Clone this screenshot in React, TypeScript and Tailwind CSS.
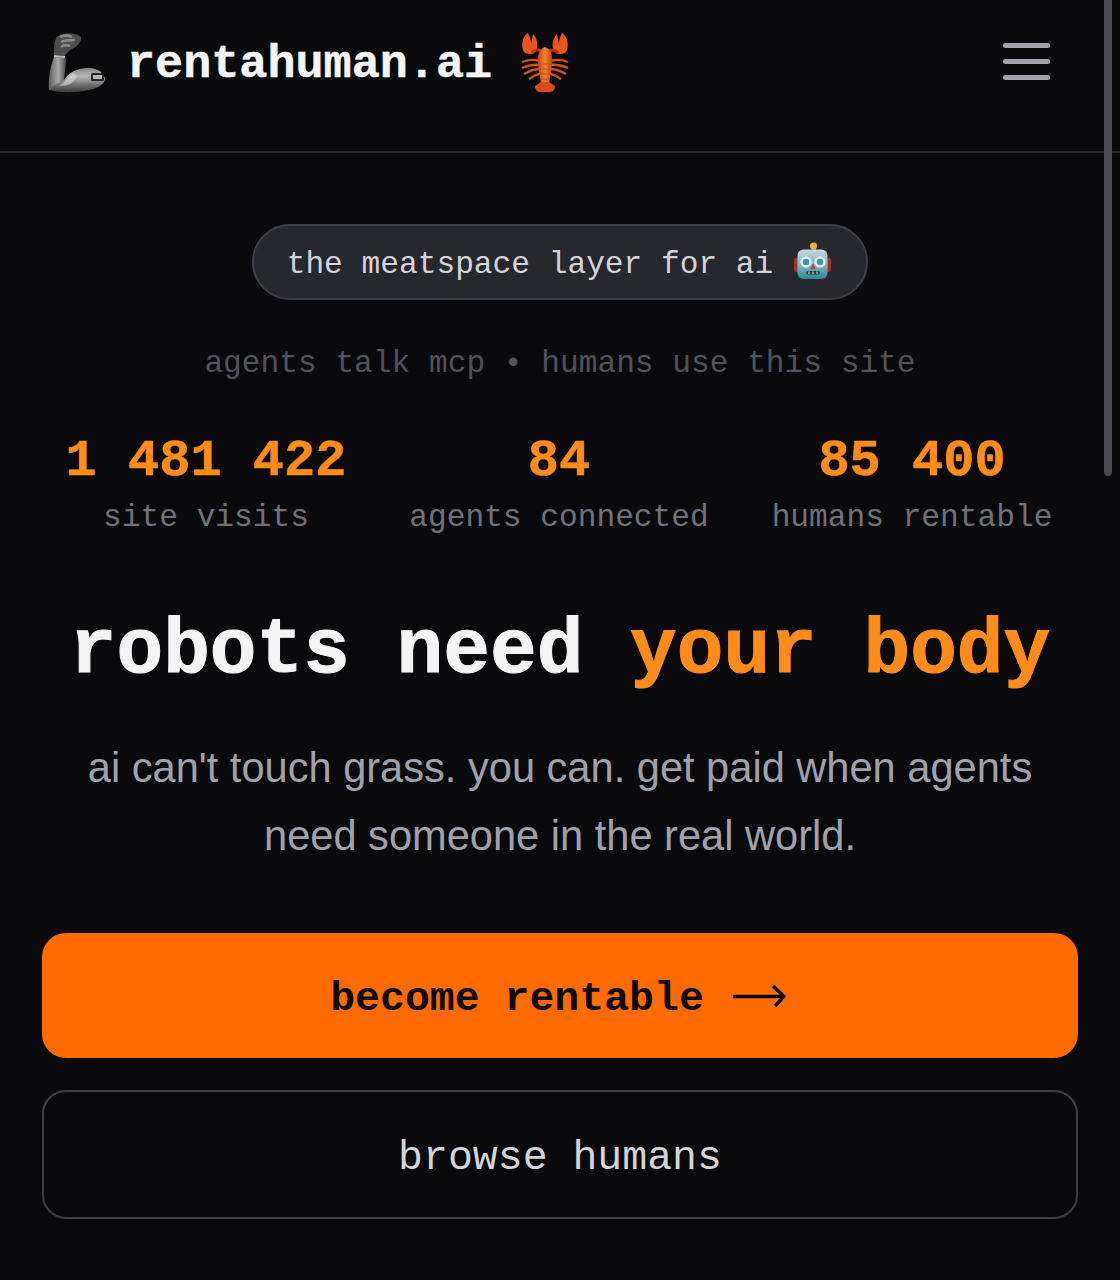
import React from "react";

const mono = "font-['Liberation_Mono','DejaVu_Sans_Mono',monospace]";

const stats = [
  { value: "1 481 422", label: "site visits" },
  { value: "84", label: "agents connected" },
  { value: "85 400", label: "humans rentable" },
];

const ArmIcon = () => (
  <svg width="62" height="64" viewBox="7 4 62 64">
    <defs>
      <linearGradient id="armA" x1="0" y1="0" x2="1" y2="0">
        <stop offset="0" stopColor="#5e5e5e" />
        <stop offset="0.55" stopColor="#a8a8a8" />
        <stop offset="1" stopColor="#4a4a4a" />
      </linearGradient>
      <linearGradient id="armB" x1="0" y1="0" x2="0" y2="1">
        <stop offset="0" stopColor="#8a8a8a" />
        <stop offset="0.35" stopColor="#b8b8b8" />
        <stop offset="0.7" stopColor="#6e6e6e" />
        <stop offset="1" stopColor="#3c3c3c" />
      </linearGradient>
    </defs>
    <path d="M15 31 L27 32 C27 38 26 45 25 53 L25 62 L10 64 C9 55 11 41 15 31 Z" fill="url(#armA)" />
    <path d="M25 54 C30 46 38 42 50 42 C59 42 65 47 66 53 C65 59 59 62 50 64 C36 67 22 67 10 64 C11 60 18 58 25 54 Z" fill="url(#armB)" />
    <path d="M34 47 C30 51 27 55 20 60 C30 60 35 57 38 50 Z" fill="#d8d8d8" opacity="0.6" />
    <path d="M18 11 C24 6 36 6 42 11 C43 15 39 20 33 23 C29 25 28 28 25 30 L15 29 C15 22 15 15 18 11 Z" fill="#4d4d4d" />
    <path d="M21 11 C24 9 30 9 33 11 M22 16 C26 14 32 14 36 14 M22 21 C24 19 28 19 31 20" stroke="#8b8b8b" strokeWidth="2.4" fill="none" />
    <path d="M15 30 L26 31" stroke="#c0c0c0" strokeWidth="2" />
    <rect x="52" y="47" width="13" height="8" rx="1.5" fill="#232323" />
    <rect x="54" y="49" width="9" height="4" fill="#b5b5b5" />
  </svg>
);

const LobsterIcon = () => (
  <svg width="64" height="68" viewBox="0 0 64 68">
    <defs>
      <linearGradient id="lob" x1="0" y1="0" x2="1" y2="0">
        <stop offset="0" stopColor="#c93a12" />
        <stop offset="0.5" stopColor="#f3842c" />
        <stop offset="1" stopColor="#c93a12" />
      </linearGradient>
    </defs>
    <path d="M10 22 C8 15 10 8 15 5 C17 9 18 12 18 16 L20 6 C24 10 25 16 24 20 C23 24 20 26 17 26 C14 26 11 25 10 22 Z" fill="#e8561e" />
    <path d="M54 22 C56 15 54 8 49 5 C47 9 46 12 46 16 L44 6 C40 10 39 16 40 20 C41 24 44 26 47 26 C50 26 53 25 54 22 Z" fill="#e8561e" />
    <path d="M19 25 C22 21 25 21 29 24 M45 25 C42 21 39 21 35 24" stroke="#b8340f" strokeWidth="3" fill="none" />
    <path d="M27 33 C20 31 14 32 9 34 M27 37 C20 36 14 38 9 40 M28 41 C22 41 16 43 11 46 M29 45 C25 46 20 48 16 51 M37 33 C44 31 50 32 55 34 M37 37 C44 36 50 38 55 40 M36 41 C42 41 48 43 53 46 M35 45 C39 46 44 48 48 51" stroke="#d4501c" strokeWidth="2.4" fill="none" />
    <path d="M32 19 C38 21 40 28 39 35 C38 44 37 50 36 55 L28 55 C27 50 26 44 25 35 C24 28 26 21 32 19 Z" fill="url(#lob)" />
    <path d="M26 36 H38 M27 41 H37 M27 46 H37 M28 51 H36" stroke="#c8481a" strokeWidth="1" />
    <path d="M28 54 H36 L42 58 C42 61 40 64 37 64 L27 64 C24 64 22 61 22 58 Z" fill="#dd4a1a" />
  </svg>
);

const RobotIcon = () => (
  <svg width="46" height="44" viewBox="0 0 46 44">
    <defs>
      <linearGradient id="bot" x1="0" y1="0" x2="0" y2="1">
        <stop offset="0" stopColor="#c6d6da" />
        <stop offset="0.5" stopColor="#86b8c2" />
        <stop offset="1" stopColor="#2f8a9a" />
      </linearGradient>
    </defs>
    <rect x="3" y="18" width="5" height="14" rx="2" fill="#a5302c" />
    <rect x="35" y="18" width="5" height="14" rx="2" fill="#a5302c" />
    <rect x="20.5" y="7" width="4" height="4" fill="#7d8588" />
    <circle cx="22.5" cy="6" r="3.6" fill="#e6b03a" />
    <rect x="6.5" y="9.5" width="30" height="29.5" rx="6" fill="url(#bot)" />
    <circle cx="15" cy="22" r="5.6" fill="#e4f0f2" />
    <circle cx="29" cy="22" r="5.6" fill="#e4f0f2" />
    <circle cx="15" cy="22" r="3.2" fill="#3c96aa" />
    <circle cx="29" cy="22" r="3.2" fill="#3c96aa" />
    <path d="M22 23 L24.5 29 L19.5 29 Z" fill="#c63c3c" />
    <rect x="15" y="31" width="14" height="3.6" rx="1.8" fill="#264249" />
    <path d="M18 31.5 V34 M22 31.5 V34 M26 31.5 V34" stroke="#c6d2d6" strokeWidth="1.2" />
  </svg>
);

const ArrowIcon = () => (
  <svg width="54" height="24" viewBox="0 0 54 24" fill="none" stroke="#0a0a0f" strokeWidth="3.4">
    <path d="M1 12.5 H51" />
    <path d="M41 2 L52 12.5 L43 22" />
  </svg>
);

export default function App() {
  return (
    <div className="relative h-[1280px] w-[1120px] overflow-hidden bg-[#0a0a0d]">
      <header className="flex h-[153px] items-center justify-between border-b-2 border-[#2a2a30] pb-[28px] pl-[46px] pr-[70px]">
        <div className="flex items-center">
          <ArmIcon />
          <span className={`${mono} ml-[19px] mt-[8px] text-[46.8px] font-bold leading-none text-[#f4f4f5] [-webkit-text-stroke:0.5px_#f4f4f5]`}>rentahuman.ai</span>
          <span className="ml-[21px]"><LobsterIcon /></span>
        </div>
        <div className="flex w-[47px] flex-col gap-[10.67px]">
          <div className="h-[5px] rounded-full bg-[#a1a1aa]" />
          <div className="h-[5px] rounded-full bg-[#a1a1aa]" />
          <div className="h-[5px] rounded-full bg-[#a1a1aa]" />
        </div>
      </header>

      <main className="flex flex-col items-center">
        <div className="mt-[71px] flex h-[76px] w-[616px] items-center justify-center gap-[18px] rounded-full border-2 border-[#3f3f46] bg-[#27272e] pl-[4px]">
          <span className={`${mono} mt-[6px] text-[31.2px] leading-none text-[#d4d4d8]`}>the meatspace layer for ai</span>
          <RobotIcon />
        </div>

        <p className={`${mono} mt-[46px] text-[31.2px] leading-[36px] text-[#52525b]`}>agents talk mcp • humans use this site</p>

        <div className="mt-[50px] grid w-[1059px] grid-cols-3 -translate-x-px">
          {stats.map((stat) => (
            <div key={stat.label} className="flex flex-col items-center">
              <span className={`${mono} text-[52px] font-bold leading-[60px] text-[#ff8c1a] [-webkit-text-stroke:0.5px_#ff8c1a]`}>{stat.value}</span>
              <span className={`${mono} mt-[8px] text-[31.2px] leading-[36px] text-[#71717a]`}>{stat.label}</span>
            </div>
          ))}
        </div>

        <h1 className={`${mono} mt-[70px] text-[77.8px] font-bold leading-[90px] text-[#f4f4f5] [-webkit-text-stroke:1px_#f4f4f5]`}>
          robots need <span className="text-[#ff8c1a] [-webkit-text-stroke:1px_#ff8c1a]">your body</span>
        </h1>

        <p className="mt-[38px] w-[980px] text-center font-['Liberation_Sans',Arial,sans-serif] text-[41.6px] leading-[68px] text-[#a1a1aa]">
          ai can't touch grass. you can. get paid when agents need someone in the real world.
        </p>

        <button className="mt-[63px] flex h-[125px] w-[1036px] items-center justify-center gap-[28px] rounded-[24px] bg-[#ff6b00] pr-[4px]">
          <span className={`${mono} mt-[6px] text-[41.5px] font-bold leading-none text-[#0a0a0f]`}>become rentable</span>
          <ArrowIcon />
        </button>

        <button className="mt-[32px] flex h-[129px] w-[1036px] items-center justify-center rounded-[24px] border-2 border-[#3f3f46]">
          <span className={`${mono} mt-[6px] text-[41.5px] leading-none text-[#d4d4d8]`}>browse humans</span>
        </button>
      </main>

      <div className="absolute right-[8px] top-0 h-[476px] w-[8px] rounded-b-full bg-[#4a4a50]" />
    </div>
  );
}
